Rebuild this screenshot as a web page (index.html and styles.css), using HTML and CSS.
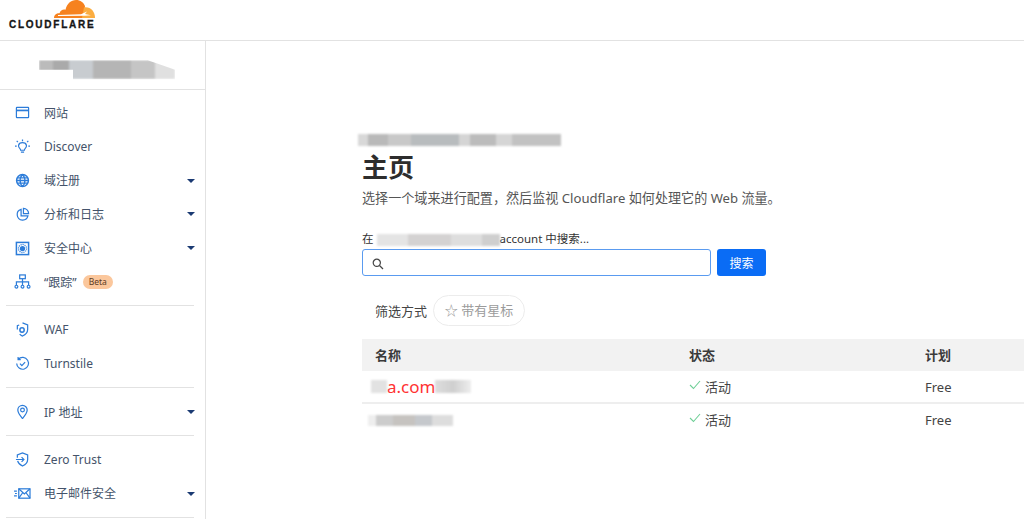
FILE: index.html
```html
<!DOCTYPE html>
<html lang="zh">
<head>
<meta charset="utf-8">
<title>Cloudflare</title>
<link rel="stylesheet" href="styles.css">
</head>
<body>
<header class="topbar">
  <div class="logo">
    <svg class="logo-cloud" width="41" height="19" viewBox="0 0 41 19" aria-hidden="true">
      <path fill="#f6821f" d="M0 18 C0 15 2.500 13 5.500 13.200 C6.500 10.500 9 9 11.500 9.800 C13 3.500 17 0 22 0 C26.500 0 29.500 2.500 31 6 L30 18 Z"/>
      <path fill="#fbad41" d="M30 7.500 C36.500 6.500 41 11.500 41 18 L28 18 Z"/>
      <path fill="#fff" d="M4 15 L27 14.200 L33 11.500 L31 14 L37 15.300 L31 15.800 L4 16 Z"/>
    </svg>
    <span class="logo-text">CLOUDFLARE</span>
  </div>
</header>
<div class="shell">
  <aside class="sidebar">
    <div class="account"><span class="smudge smudge-account"></span></div>
    <nav class="nav nav-first">
      <a class="item"><svg class="ico" viewBox="0 0 16 16"><rect x="1.500" y="2.500" width="13" height="11" rx=".6"/><path d="M1.500 5.800h13" stroke-width="1.800"/></svg><span>网站</span></a>
      <a class="item"><svg class="ico" viewBox="0 0 16 16"><path d="M5.200 10.200C4 9.200 3.600 8 3.800 6.800 4.100 5 5.800 3.800 8 3.800s3.900 1.200 4.200 3c.2 1.200-.2 2.400-1.400 3.400-.6.6-.8 1.200-.8 1.800H6c0-.6-.2-1.200-.8-1.800zM6.300 14h3.400M8 .5v1.800M1.800 2l1.300 1.300M14.200 2l-1.300 1.300M0 7.500h1.800M14.200 7.500H16"/></svg><span>Discover</span></a>
      <a class="item"><svg class="ico ico-fill" viewBox="0 0 16 16"><circle cx="8" cy="8" r="6.300" stroke-width="1.600"/><path d="M1.500 8h13M2.300 5.200h11.400M2.300 10.800h11.400M8 1.500c-3.500 3.500-3.500 9.500 0 13M8 1.500c3.500 3.500 3.500 9.500 0 13"/></svg><span>域注册</span><i class="caret"></i></a>
      <a class="item"><svg class="ico" viewBox="0 0 16 16"><path d="M6.500 2.600A5.800 5.800 0 1 0 13.800 9.500H6.500z"/><path d="M9 1.500a5.500 5.500 0 0 1 5.500 5.500H9z"/></svg><span>分析和日志</span><i class="caret"></i></a>
      <a class="item"><svg class="ico" viewBox="0 0 16 16"><rect x="1.500" y="1.500" width="13" height="13" stroke-width="1.600"/><circle class="dot" cx="8" cy="8" r="2.800"/><circle cx="8" cy="8" r="4.300" stroke-dasharray="1.200 1"/></svg><span>安全中心</span><i class="caret"></i></a>
      <a class="item"><svg class="ico ico-wide" viewBox="0 0 18 16"><rect x="6" y="1" width="6" height="4"/><path d="M9 5v3.500M2.500 12V8.500h13V12M9 8.500V12"/><circle cx="2.500" cy="13.500" r="1.500"/><circle cx="9" cy="13.500" r="1.500"/><circle cx="15.500" cy="13.500" r="1.500"/></svg><span>“跟踪”</span><em class="beta">Beta</em></a>
    </nav>
    <hr class="rule">
    <nav class="nav">
      <a class="item"><svg class="ico" viewBox="0 0 16 16"><path d="M8 1l5.500 2v5c0 3.200-2.300 5.500-5.500 7-1.200-.5-2.200-1.200-3-2M4.500 3.200L2.500 4v4"/><circle cx="7.500" cy="8.500" r="2.300" stroke-width="1.600"/></svg><span>WAF</span></a>
      <a class="item"><svg class="ico" viewBox="0 0 16 16"><path d="M3.500 3.500A6.300 6.300 0 1 1 1.800 8M3.300 1v2.800h2.800"/><path d="M5.300 8.200l2 2 3.500-3.700"/></svg><span>Turnstile</span></a>
    </nav>
    <hr class="rule">
    <nav class="nav">
      <a class="item"><svg class="ico" viewBox="0 0 16 16"><path d="M8 15.500C5 12 3 9 3 6.500a5 5 0 0 1 10 0C13 9 11 12 8 15.500z"/><circle cx="8" cy="6.300" r="2"/></svg><span>IP 地址</span><i class="caret"></i></a>
    </nav>
    <hr class="rule">
    <nav class="nav">
      <a class="item"><svg class="ico" viewBox="0 0 16 16"><path d="M2.500 6V3L8 1l5.500 2v5c0 3.200-2.300 5.500-5.500 7-2.500-1.200-4.500-3-5.200-5.500"/><path d="M1 8h8.500M7 5.500L9.500 8 7 10.500"/></svg><span>Zero Trust</span></a>
      <a class="item"><svg class="ico ico-wide" viewBox="0 0 18 16"><rect x="5" y="3" width="12" height="10"/><path d="M5 3l6 5.500L17 3M5 13l4.200-5.800M17 13l-4.200-5.800M0 5.500h3M1 8h2M0 10.500h3"/></svg><span>电子邮件安全</span><i class="caret"></i></a>
    </nav>
    <hr class="rule">
  </aside>
  <main class="main">
    <span class="smudge smudge-crumb"></span>
    <h1 class="title">主页</h1>
    <p class="desc">选择一个域来进行配置，然后监视 Cloudflare 如何处理它的 Web 流量。</p>
    <label class="search-label">在<span class="smudge smudge-label"></span>account 中搜索...</label>
    <form class="search">
      <div class="field">
        <svg class="search-ico" width="12" height="12" viewBox="0 0 12 12"><circle cx="4.800" cy="4.800" r="3.600"/><path d="M7.500 7.500L11 11"/></svg>
      </div>
      <button class="btn" type="button">搜索</button>
    </form>
    <div class="filter">
      <span class="filter-label">筛选方式</span>
      <span class="pill">☆ 带有星标</span>
    </div>
    <div class="table">
      <div class="row head"><span class="c1">名称</span><span class="c2">状态</span><span class="c3">计划</span></div>
      <div class="row line">
        <span class="c1 domain"><span class="smudge smudge-d1"></span><b class="red">a.com</b><span class="smudge smudge-d1b"></span></span>
        <span class="c2 status"><svg class="check" width="12" height="10" viewBox="0 0 12 10"><path d="M1 5l3.500 3.500L11 1"/></svg>活动</span>
        <span class="c3">Free</span>
      </div>
      <div class="row row-last">
        <span class="c1 domain"><span class="smudge smudge-d2"></span></span>
        <span class="c2 status"><svg class="check" width="12" height="10" viewBox="0 0 12 10"><path d="M1 5l3.500 3.500L11 1"/></svg>活动</span>
        <span class="c3">Free</span>
      </div>
    </div>
  </main>
</div>
</body>
</html>
```
FILE: styles.css
```css
* { box-sizing: border-box; }
html, body { margin: 0; height: 519px; overflow: hidden; background: #fff; }
body { font-family: "Noto Sans", "Noto Sans CJK SC", sans-serif; color: #36393a; }

.topbar { height: 41px; border-bottom: 1px solid #e2e2e2; padding-left: 9px; }
.logo { width: 86px; height: 40px; display: flex; flex-direction: column; align-items: flex-end; }
.logo-cloud { display: block; flex: none; }
.logo-text { align-self: flex-start; font-family: "Liberation Sans", sans-serif; font-weight: 700; font-size: 10px; line-height: 12px; letter-spacing: 1.750px; color: #161616; white-space: nowrap; -webkit-text-stroke: .3px #161616; }

.shell { display: flex; height: 478px; }
.sidebar { width: 206px; flex: none; border-right: 1px solid #e2e2e2; overflow: hidden; }
.account { height: 49px; border-bottom: 1px solid #e2e2e2; padding: 17px 0 0 39px; }

.nav { display: flex; flex-direction: column; }
.nav-first { padding-top: 6px; }
.item { display: flex; align-items: center; height: 33.800px; padding-left: 15px; font-size: 12px; color: #44536a; position: relative; white-space: nowrap; }
.ico { width: 15px; height: 15px; margin-right: 14px; flex: none; fill: none; stroke: #2c7cd9; stroke-width: 1.300; }
.ico-wide { width: 17px; margin-left: -1px; margin-right: 13px; }
.ico-fill { stroke-width: 1.500; }
.dot { fill: #2c7cd9; stroke: none; }
.caret { position: absolute; left: 187px; top: 15px; border: 4px solid transparent; border-top: 4px solid #1b3a73; border-bottom: 0; }
.beta { margin-left: 6px; background: #fbc79c; color: #5b3a1e; border-radius: 8px; font-style: normal; font-size: 8.500px; line-height: 14px; padding: 0 6px; }
.rule { border: 0; border-top: 1px solid #e2e2e2; margin: 6.600px 11px 6.600px 6px; height: 0; }

.main { flex: 1; padding: 93px 0 0 156px; min-width: 0; }
.smudge { display: inline-block; vertical-align: middle; filter: blur(1px); }
.smudge-account { width: 136px; height: 19px; margin-top: -2px; background: linear-gradient(90deg, #bbb 0 10%, #aaa 10% 22%, #c8ccd0 22% 40%, #b5b5b5 40% 68%, #c5c5c5 68% 85%, #e0e0e0 85% 100%); clip-path: polygon(0 0, 80% 0, 100% 50%, 100% 100%, 25% 100%, 25% 50%, 0 50%); }
.smudge-crumb { display: block; width: 203px; height: 12px; margin-left: -4px; background: linear-gradient(90deg, #d8d8d8 0 5%, #b9b9b9 5% 15%, #c8c8c8 15% 26%, #b8bcbe 26% 50%, #d5d5d5 50% 55%, #bcbcbc 55% 68%, #d5d5d5 68% 76%, #c2c2c2 76% 100%); }
.smudge-label { width: 123px; height: 12px; margin: 0 0 0 3px; background: linear-gradient(90deg, #e4e4e4 0 25%, #d4d2d2 25% 60%, #dedede 60% 85%, #cfcfcf 85% 100%); }
.smudge-d1 { width: 16px; height: 13px; margin-left: -4px; background: #e2e2e2; }
.smudge-d1b { width: 36px; height: 13px; background: linear-gradient(90deg, #ddd, #cfcfcf 50%, #eee); }
.smudge-d2 { width: 85px; height: 11px; margin: 2px 0 0 -7px; background: linear-gradient(90deg, #eee 0 10%, #ccc 10% 30%, #c6c3c0 30% 55%, #c5c8cc 55% 75%, #ddd 75% 100%); }

.title { font-size: 26px; line-height: 36px; font-weight: 700; margin: 3px 0 0; color: #2d2d2d; }
.desc { font-size: 13.100px; line-height: 20px; margin: 3px 0 0; color: #555; white-space: nowrap; }
.search-label { display: block; font-size: 11.500px; line-height: 14px; margin-top: 24px; color: #333; white-space: nowrap; }
.search { display: flex; gap: 6px; margin-top: 3px; }
.field { width: 349px; height: 27px; border: 1px solid #5a9bf0; border-radius: 3px; padding: 8px 0 0 9px; }
.search-ico { display: block; fill: none; stroke: #444; stroke-width: 1.200; }
.btn { width: 49px; height: 27px; border: 0; border-radius: 3px; background: #0a6cf5; color: #fff; font: inherit; font-size: 12px; padding: 0; }

.filter { display: flex; align-items: center; gap: 6px; margin-top: 19px; padding-left: 13px; }
.filter-label { font-size: 13px; color: #444; }
.pill { height: 31px; width: 92px; border: 1px solid #ececec; border-radius: 16px; font-size: 13px; line-height: 29px; text-align: center; color: #9b9b9b; white-space: nowrap; }

.table { margin-top: 13px; }
.row { display: flex; align-items: center; height: 33px; font-size: 13px; color: #444; }
.head { height: 32px; padding-bottom: 2px; background: #f2f2f2; font-weight: 700; color: #3a3a3a; }
.line { height: 33px; border-bottom: 2px solid #eee; }
.row-last { padding-bottom: 2px; }
.c1 { width: 327px; padding-left: 13px; flex: none; }
.c2 { width: 236px; flex: none; }
.c3 { flex: 1; }
.domain { display: flex; align-items: center; }
.red { font-weight: 400; font-size: 17px; color: #f33; }
.status { display: flex; align-items: center; gap: 4px; }
.check { fill: none; stroke: #6fcf97; stroke-width: 1.100; margin-top: -4px; }
```
